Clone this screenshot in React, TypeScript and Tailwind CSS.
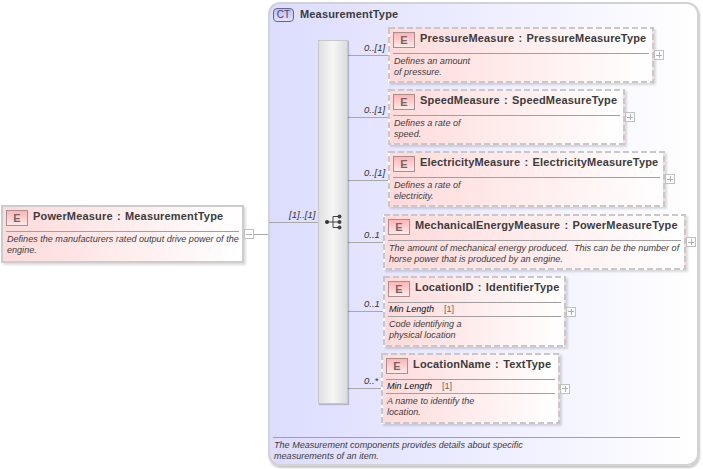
import React from "react";

const font = { fontFamily: '"Liberation Sans", Arial, sans-serif' };

type NodeProps = {
  x: number; y: number; w: number; h: number;
  name: string; type: string;
  doc: string[];
  minLength?: boolean;
  dashed?: boolean;
  toggle: string;
};

function ElementNode({ x, y, w, h, name, type, doc, minLength, dashed = true, toggle }: NodeProps) {
  return (
    <div
      className={`absolute box-border border-2 bg-gradient-to-r from-[#ffdada] to-white shadow-[2px_2px_2px_rgba(0,0,0,0.14)] ${dashed ? "border-transparent" : "border-[#cccccc]"}`}
      style={{ left: x, top: y, width: w, height: h }}
    >
      {dashed && (
        <svg className="pointer-events-none absolute left-[-2px] top-[-2px]" width={w} height={h}>
          <rect x="1" y="1" width={w - 2} height={h - 2} fill="none" stroke="#c8c8c8" strokeWidth="2" strokeDasharray="6 3" />
        </svg>
      )}
      <div className="flex h-[24px] items-start pl-[3px] pt-[2px]">
        <span className="mt-[1px] flex h-[16px] w-[22px] shrink-0 items-center justify-center border border-[#a89090] bg-gradient-to-b from-[#ffb4b4] to-[#ffeaea] text-[11px] font-bold leading-none text-[#7a6464]">E</span>
        <span className="ml-[5px] whitespace-nowrap text-[11px] font-bold leading-[14px] tracking-[0.17px] text-[#3c3c3c]">
          {name} <span className="mx-[1px]">:</span> {type}
        </span>
      </div>
      <div className="mx-[3px] border-t border-[#a0a0a0]" />
      {minLength && (
        <>
          <div className="flex h-[13px] items-center pl-[4px] text-[9.1px] italic leading-none text-[#111]">
            <span className="w-[55px]">Min Length</span>
            <span className="not-italic text-[#666]">[1]</span>
          </div>
          <div className="mx-[3px] border-t border-[#a0a0a0]" />
        </>
      )}
      <div className="pl-[4px] pt-[2px] text-[9.07px] italic leading-[10.5px] text-[#3c3c3c]">
        {doc.map((l) => <div key={l} className="whitespace-pre">{l}</div>)}
      </div>
      <div
        className="absolute top-1/2 flex h-[10px] w-[10px] -translate-y-1/2 items-center justify-center border border-[#c0c0c0] bg-white/70"
        style={{ left: w - 2 }}
      >
        <div className="relative h-[6px] w-[6px]">
          <div className="absolute left-0 right-0 top-[2.5px] h-px bg-[#b0b0b0]" />
          {toggle === "+" && <div className="absolute bottom-0 left-[2.5px] top-0 w-px bg-[#b0b0b0]" />}
        </div>
      </div>
    </div>
  );
}

const children = [
  { x: 388, y: 27, w: 266, h: 56, name: "PressureMeasure", type: "PressureMeasureType", doc: ["Defines an amount", "of pressure."], card: "0..[1]", ly: 55 },
  { x: 388, y: 89, w: 237, h: 56, name: "SpeedMeasure", type: "SpeedMeasureType", doc: ["Defines a rate of", "speed."], card: "0..[1]", ly: 117 },
  { x: 388, y: 151, w: 277, h: 56, name: "ElectricityMeasure", type: "ElectricityMeasureType", doc: ["Defines a rate of", "electricity."], card: "0..[1]", ly: 180 },
  { x: 383, y: 214, w: 303, h: 56, name: "MechanicalEnergyMeasure", type: "PowerMeasureType", doc: ["The amount of mechanical energy produced.  This can be the number of", "horse power that is produced by an engine."], card: "0..1", ly: 242 },
  { x: 383, y: 276, w: 183, h: 71, name: "LocationID", type: "IdentifierType", doc: ["Code identifying a", "physical location"], card: "0..1", ly: 311, minLength: true },
  { x: 381, y: 353, w: 179, h: 71, name: "LocationName", type: "TextType", doc: ["A name to identify the", "location."], card: "0..*", ly: 388, minLength: true },
];

export default function App() {
  return (
    <div className="relative h-[469px] w-[703px] overflow-hidden bg-white" style={font}>
      {/* complex type container */}
      <div className="absolute left-[268px] top-[2px] box-border flex h-[464px] w-[431px] flex-col rounded-[12px] border-2 border-[#d2d2d2] bg-gradient-to-r from-[#dcdcff] to-white px-[3px] pb-[3px] pt-[4px] shadow-[1px_2px_2px_rgba(0,0,0,0.22)]">
        <div className="flex items-start">
          <span className="flex h-[14px] w-[21px] items-center justify-center rounded-[4px] border border-[#66668a] bg-gradient-to-b from-[#bcbcf2] to-[#e4e4ff] text-[10px] leading-none text-[#444466]">CT</span>
          <span className="ml-[6px] text-[11px] font-bold leading-[12px] tracking-[0.17px] text-[#3c3c3c]">MeasurementType</span>
        </div>
        <div className="mr-[14px] mt-auto border-t border-[#a0a0a0] pt-[2px] text-[9.07px] italic leading-[10.5px] text-[#3c3c3c]">
          <div className="pl-[1px]">The Measurement components provides details about specific</div>
          <div className="pl-[1px]">measurements of an item.</div>
        </div>
      </div>

      {/* connector lines */}
      <svg className="absolute left-0 top-0" width="703" height="469">
        <path d="M254 234.5H268M269 222.5H318" stroke="#a8a8a8" fill="none" />
        {children.map((c) => (
          <path key={c.name} d={`M347 ${c.ly + 0.5}H${c.x}`} stroke="#a8a8a8" fill="none" />
        ))}
      </svg>

      {/* cardinality labels */}
      <div className="absolute left-[289px] top-[210px] text-[9.5px] italic leading-none text-[#333]">[1]..[1]</div>
      {children.map((c) => (
        <div key={c.name} className="absolute left-[364px] text-[9.5px] italic leading-none text-[#333]" style={{ top: c.ly - 12 }}>{c.card}</div>
      ))}

      {/* sequence bar */}
      <div className="absolute left-[318px] top-[40px] box-border h-[364px] w-[30px] border border-[#c8c8c8] bg-gradient-to-r from-[#e0e0e0] via-[#f6f6f6] to-[#dcdcdc] shadow-[1px_1px_1px_rgba(0,0,0,0.2)]">
        <svg className="absolute left-[5px] top-[172px]" width="20" height="18" viewBox="0 0 20 18">
          <path d="M3 9H9M9 3.5V14.5M9 3.5H15M9 9H15M9 14.5H15" stroke="#444" strokeWidth="1" fill="none" />
          <circle cx="3" cy="9" r="2" fill="#333" />
          <circle cx="15.5" cy="3.5" r="2" fill="#444" />
          <circle cx="15.5" cy="9" r="2" fill="#444" />
          <circle cx="15.5" cy="14.5" r="2" fill="#444" />
        </svg>
      </div>

      {/* root element */}
      <ElementNode
        x={1} y={205} w={243} h={58}
        name="PowerMeasure" type="MeasurementType"
        doc={["Defines the manufacturers rated output drive power of the", "engine."]}
        dashed={false} toggle="-"
      />

      {children.map((c) => (
        <ElementNode key={c.name} x={c.x} y={c.y} w={c.w} h={c.h} name={c.name} type={c.type} doc={c.doc} minLength={c.minLength} toggle="+" />
      ))}
    </div>
  );
}
